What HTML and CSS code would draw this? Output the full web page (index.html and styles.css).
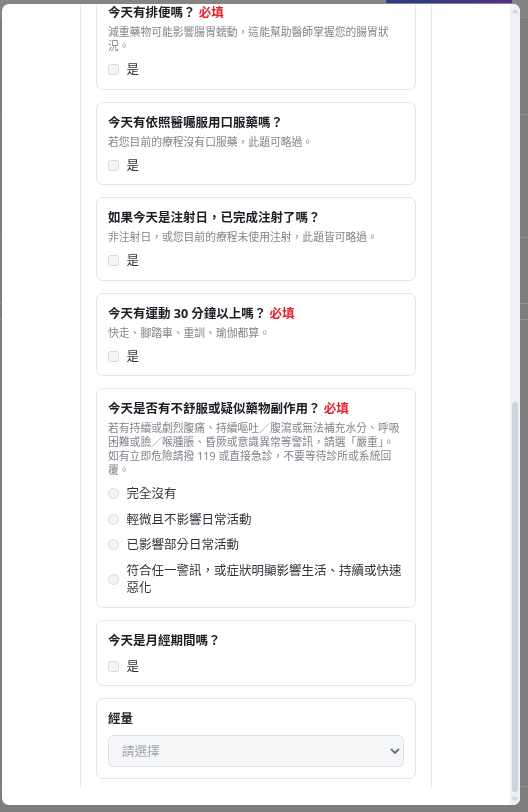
FILE: index.html
```html
<!DOCTYPE html>
<html lang="zh-Hant">
<head>
<meta charset="utf-8">
<title>每日紀錄</title>
<link rel="stylesheet" href="styles.css">
</head>
<body>
<div class="page">
  <div class="page-header"><div class="page-accent"></div></div>
  <div class="page-row row-a"></div>
  <div class="page-row row-b"></div>
  <div class="page-row row-c"></div>
  <div class="page-row row-d"></div>
  <div class="page-row row-e"></div>
</div>

<div class="modal">
  <div class="modal-body">
    <div class="column">
      <section class="card">
        <h3 class="q-title">今天有排便嗎？ <span class="req">必填</span></h3>
        <p class="q-desc">減重藥物可能影響腸胃蠕動，這能幫助醫師掌握您的腸胃狀況。</p>
        <div class="options">
          <label class="opt"><input type="checkbox" class="box"><span>是</span></label>
        </div>
      </section>

      <section class="card">
        <h3 class="q-title">今天有依照醫囑服用口服藥嗎？</h3>
        <p class="q-desc">若您目前的療程沒有口服藥，此題可略過。</p>
        <div class="options">
          <label class="opt"><input type="checkbox" class="box"><span>是</span></label>
        </div>
      </section>

      <section class="card">
        <h3 class="q-title">如果今天是注射日，已完成注射了嗎？</h3>
        <p class="q-desc">非注射日，或您目前的療程未使用注射，此題皆可略過。</p>
        <div class="options">
          <label class="opt"><input type="checkbox" class="box"><span>是</span></label>
        </div>
      </section>

      <section class="card">
        <h3 class="q-title">今天有運動 30 分鐘以上嗎？ <span class="req">必填</span></h3>
        <p class="q-desc">快走、腳踏車、重訓、瑜伽都算。</p>
        <div class="options">
          <label class="opt"><input type="checkbox" class="box"><span>是</span></label>
        </div>
      </section>

      <section class="card">
        <h3 class="q-title">今天是否有不舒服或疑似藥物副作用？ <span class="req">必填</span></h3>
        <p class="q-desc">若有持續或劇烈腹痛、持續嘔吐／腹瀉或無法補充水分、呼吸困難或臉／喉腫脹、昏厥或意識異常等警訊，請選「嚴重」。如有立即危險請撥 119 或直接急診，不要等待診所或系統回覆。</p>
        <div class="options">
          <label class="opt"><input type="radio" name="side" class="box round"><span>完全沒有</span></label>
          <label class="opt"><input type="radio" name="side" class="box round"><span>輕微且不影響日常活動</span></label>
          <label class="opt"><input type="radio" name="side" class="box round"><span>已影響部分日常活動</span></label>
          <label class="opt"><input type="radio" name="side" class="box round"><span>符合任一警訊，或症狀明顯影響生活、持續或快速惡化</span></label>
        </div>
      </section>

      <section class="card">
        <h3 class="q-title">今天是月經期間嗎？</h3>
        <div class="options">
          <label class="opt"><input type="checkbox" class="box"><span>是</span></label>
        </div>
      </section>

      <section class="card card-select">
        <label class="q-title field-label" for="flow">經量</label>
        <div class="select-wrap">
          <select id="flow" class="select">
            <option>請選擇</option>
            <option>少量</option>
            <option>中量</option>
            <option>大量</option>
          </select>
          <svg class="chevron" width="10" height="7" viewBox="0 0 10 7" aria-hidden="true"><path d="M1.5 1.5 L5 5 L8.5 1.5" fill="none" stroke="#6b7280" stroke-width="1.8" stroke-linecap="round" stroke-linejoin="round"/></svg>
        </div>
      </section>
    </div>
  </div>
  <div class="scrollbar">
    <div class="sb-arrow"><span class="tri up"></span></div>
    <div class="sb-track"><div class="sb-thumb"></div></div>
    <div class="sb-arrow sb-down"><span class="tri down"></span></div>
  </div>
</div>
</body>
</html>
```

FILE: styles.css
```css
html, body {
  margin: 0;
  padding: 0;
}

body {
  width: 528px;
  height: 812px;
  overflow: hidden;
  background: #7e7e7e;
  font-family: "Noto Sans", "Noto Sans CJK TC", sans-serif;
}

/* dimmed page behind the dialog */
.page {
  display: flex;
  flex-direction: column;
}

.page-header {
  height: 17px;
  background: #858585;
  border-bottom: 1px solid #8c8c8c;
  display: flex;
}

.page-accent {
  margin-left: 386px;
  width: 126px;
  height: 3px;
  background: linear-gradient(90deg, #263f86, #552e8a);
}

.page-row {
  border-bottom: 1px solid #929292;
}

.row-a { height: 96px; }
.row-b { height: 122px; }
.row-c { height: 65px; }
.row-d { height: 15px; }
.row-e { height: 466px; }

/* dialog */
.modal {
  position: fixed;
  left: 2px;
  top: 4px;
  width: 518px;
  height: 801px;
  background: #ffffff;
  border-radius: 7px;
  overflow: hidden;
  display: flex;
}

.modal-body {
  flex: 1;
  min-width: 0;
  overflow: hidden;
}

.column {
  box-sizing: border-box;
  width: 352px;
  margin: -12px auto 0;
  padding: 0 15px 8px;
  border-left: 1px solid #e6e8eb;
  border-right: 1px solid #e6e8eb;
  display: flex;
  flex-direction: column;
  gap: 12px;
}

.card {
  border: 1px solid #e4e6ea;
  border-radius: 7px;
  padding: 11px 11px 10px;
  background: #fff;
}

.q-title {
  display: block;
  margin: 0;
  font-size: 12.5px;
  line-height: 18px;
  font-weight: 700;
  color: #1b1e23;
}

.req {
  color: #e0262b;
  font-weight: 700;
}

.q-desc {
  margin: 3px 0 0;
  font-size: 10.8px;
  line-height: 14px;
  color: #80858c;
}

.options {
  margin-top: 8px;
  display: flex;
  flex-direction: column;
  gap: 8px;
}

.opt {
  display: flex;
  align-items: center;
  gap: 7.5px;
  font-size: 12.5px;
  line-height: 17.5px;
  color: #30343a;
}

.box {
  -webkit-appearance: none;
  appearance: none;
  flex: none;
  box-sizing: border-box;
  width: 11px;
  height: 11px;
  margin: 0;
  border: 1px solid #d6d9de;
  border-radius: 2.5px;
  background: #f4f5f7;
}

.box.round {
  border-radius: 50%;
}

.card-select {
  padding-bottom: 11px;
}

.select-wrap {
  position: relative;
  margin-top: 7px;
}

.select {
  -webkit-appearance: none;
  appearance: none;
  display: block;
  box-sizing: border-box;
  width: 100%;
  height: 32px;
  margin: 0;
  padding: 0 26px 0 13px;
  border: 1px solid #dfe2e6;
  border-radius: 5px;
  background: #f5f6f8;
  font-family: "Noto Sans", "Noto Sans CJK TC", sans-serif;
  font-size: 12.5px;
  color: #a3a7ad;
}

.chevron {
  position: absolute;
  right: 4px;
  top: 13px;
  pointer-events: none;
}

/* scrollbar */
.scrollbar {
  flex: none;
  width: 10px;
  background: #eef2f7;
  display: flex;
  flex-direction: column;
}

.sb-arrow {
  height: 14px;
  display: flex;
  align-items: center;
  justify-content: center;
}

.sb-down {
  height: 13px;
}

.tri {
  width: 0;
  height: 0;
  border-left: 4px solid transparent;
  border-right: 4px solid transparent;
}

.tri.up {
  border-bottom: 4px solid #cfd7e2;
}

.tri.down {
  border-top: 4px solid #cfd7e2;
}

.sb-track {
  flex: 1;
  display: flex;
  flex-direction: column;
  justify-content: flex-end;
  align-items: center;
}

.sb-thumb {
  width: 6px;
  height: 390px;
  background: #cbd5e1;
  border-radius: 3px;
}
```
